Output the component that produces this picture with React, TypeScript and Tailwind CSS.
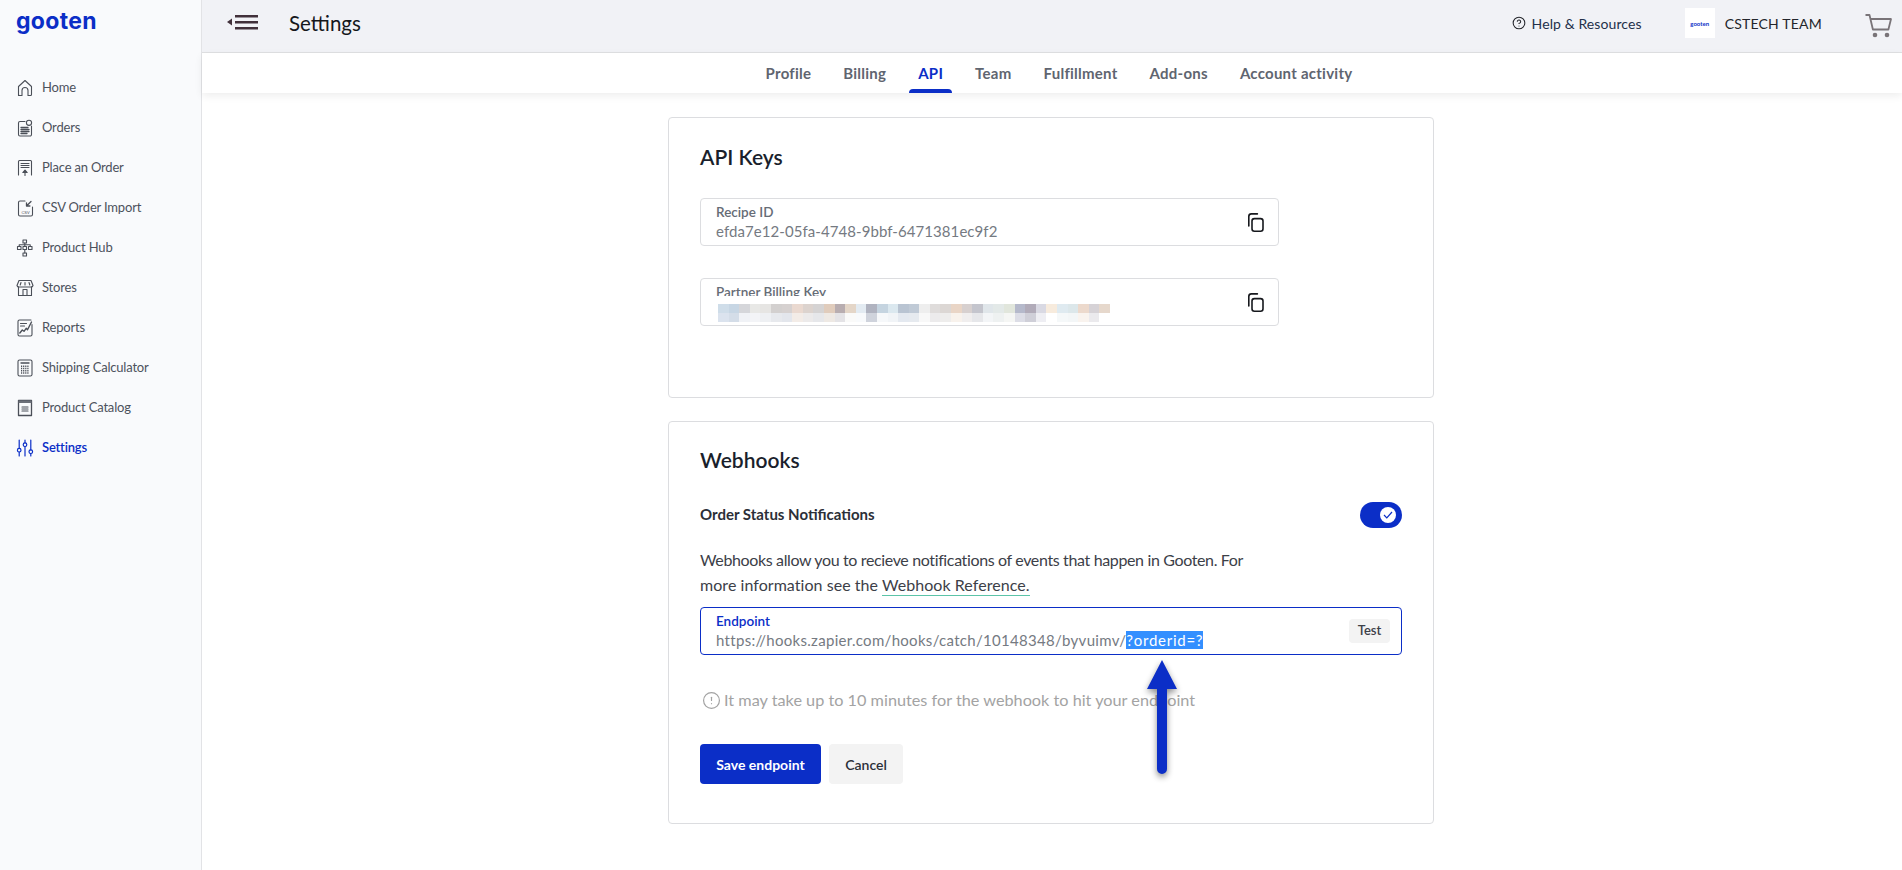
import { CircleAlert, CircleHelp } from "lucide-react";
import type { ReactNode } from "react";

const base = "Lato, 'Noto Sans', sans-serif";

function Ico({ children, color = "#4b4f58" }: { children: ReactNode; color?: string }) {
  return (
    <svg
      width="18"
      height="18"
      viewBox="0 0 18 18"
      fill="none"
      stroke={color}
      strokeWidth="1.1"
      strokeLinecap="round"
      strokeLinejoin="round"
      className="shrink-0"
    >
      {children}
    </svg>
  );
}

const navItems: { label: string; icon: ReactNode; active?: boolean }[] = [
  {
    label: "Home",
    icon: (
      <Ico>
        <path d="M2.5 16.5V7.5L9 1.5l6.5 6v8a1 1 0 0 1-1 1h-2.5v-5a3 3 0 0 0-6 0v5H3.5a1 1 0 0 1-1-1z" />
      </Ico>
    ),
  },
  {
    label: "Orders",
    icon: (
      <Ico>
        <path d="M9 2.5H4a1.5 1.5 0 0 0-1.5 1.5v11.5A1.5 1.5 0 0 0 4 17h10a1.5 1.5 0 0 0 1.5-1.5V7" />
        <circle cx="13" cy="3.8" r="2.6" />
        <path d="M5 8.5h7M5 10.5h8M5 12.5h8M5 14.5h6" strokeWidth="1.3" />
      </Ico>
    ),
  },
  {
    label: "Place an Order",
    icon: (
      <Ico>
        <path d="M2.5 16V2.5a1 1 0 0 1 1-1h11a1 1 0 0 1 1 1V16" />
        <path d="M5 4.5h8M5 6.5h8M5 8.5h8" />
        <path d="M9 16.5V11.5M6.8 13.5L9 11l2.2 2.5z" fill="#4b4f58" />
      </Ico>
    ),
  },
  {
    label: "CSV Order Import",
    icon: (
      <Ico>
        <path d="M9 2H4a1.5 1.5 0 0 0-1.5 1.5v12A1.5 1.5 0 0 0 4 17h11a1.5 1.5 0 0 0 1.5-1.5V8" />
        <path d="M15 2.5L10.5 7M10.5 3.8V7h3.4" strokeWidth="1.3" />
        <text x="9.5" y="14.5" fontSize="4" textAnchor="middle" fill="#4b4f58" stroke="none" fontFamily="'Liberation Sans', sans-serif">
          CSV
        </text>
      </Ico>
    ),
  },
  {
    label: "Product Hub",
    icon: (
      <Ico>
        <rect x="7" y="1" width="3.5" height="3" />
        <rect x="1.5" y="7.5" width="3.5" height="3" />
        <rect x="7" y="7.5" width="3.5" height="3" />
        <rect x="12.5" y="7.5" width="3.5" height="3" />
        <rect x="7" y="14" width="3.5" height="3" />
        <path d="M8.8 4v3.5M8.8 10.5V14M3.2 7.5V5.7h11v1.8" />
      </Ico>
    ),
  },
  {
    label: "Stores",
    icon: (
      <Ico>
        <path d="M3 1.5h12l2 5a2 2 0 0 1-2 1.5H3A2 2 0 0 1 1 6.5z" />
        <path d="M2.5 8v8.5h13V8M7 16.5v-6h4v6M5 3.5l-.8 2.5M9 3.5V6M13 3.5l.8 2.5" />
      </Ico>
    ),
  },
  {
    label: "Reports",
    icon: (
      <Ico>
        <path d="M16 5.5v10a1.5 1.5 0 0 1-1.5 1.5h-11A1.5 1.5 0 0 1 2 15.5v-13A1.5 1.5 0 0 1 3.5 1H15" />
        <path d="M4.5 4.5h6M4.5 7h4" />
        <path d="M3.8 14l2.5-3 1.7 1.3 2.2-3 1.3 1.4L15.5 3" strokeWidth="1.4" />
      </Ico>
    ),
  },
  {
    label: "Shipping Calculator",
    icon: (
      <Ico>
        <rect x="2" y="1" width="14" height="16" rx="1.6" />
        <path d="M5 4h8" strokeWidth="1.3" />
        <path d="M5 7.2h8M5 9.5h8M5 11.7h8M5 14h8" strokeWidth="1.4" strokeDasharray="1.2 .9" strokeLinecap="butt" />
      </Ico>
    ),
  },
  {
    label: "Product Catalog",
    icon: (
      <Ico>
        <rect x="2.5" y="1.5" width="13" height="15" strokeWidth="1.3" />
        <rect x="2.5" y="1.5" width="13" height="2.5" fill="#6b6f78" stroke="none" />
        <path d="M6 8h6M6 10h6M6 12h6" strokeWidth="1.2" />
      </Ico>
    ),
  },
  {
    label: "Settings",
    active: true,
    icon: (
      <Ico color="#0b2ec7">
        <path d="M3.2 1v8.5M3.2 13v4M9 1v3M9 7.5V17M14.8 1v10M14.8 14.5V17" strokeWidth="1.2" />
        <circle cx="3.2" cy="11.2" r="1.8" strokeWidth="1.2" />
        <circle cx="9" cy="5.7" r="1.8" strokeWidth="1.2" />
        <circle cx="14.8" cy="12.7" r="1.8" strokeWidth="1.2" />
      </Ico>
    ),
  },
];

const tabs = ["Profile", "Billing", "API", "Team", "Fulfillment", "Add-ons", "Account activity"];

const blurTop = [
  "#cfdde9", "#c7d6e4", "#d5d6da", "#e8e8e6", "#e6e5e3", "#d3d0cf", "#d6d1d0", "#ead9d0", "#dcd3ce", "#d5d3d3",
  "#e0ccbc", "#b8adb0", "#e4d6c8", "#e3ebf2", "#b0b3c0", "#c5d4e0", "#dbe8ef", "#b9c4d2", "#c0cad6", "#eeeeee",
  "#dfdcdb", "#dcd7d4", "#e9d5c6", "#d7d0cf", "#c4c5cd", "#e0e6ea", "#e3e9e8", "#e1e6dc", "#b5b9cb", "#b1abb9",
  "#d9d9e3", "#f7ebdd", "#dfeaf0", "#dce7ea", "#ecd9cc", "#d6d2d6", "#e6d8cc",
];
const blurBottom = [
  "#dbe3ee", "#d4dde8", "#f0f2f6", "#f3f4f7", "#eef0f3", "#e7e9ed", "#e3e6ec", "#f3ece7", "#eceaea", "#e6e7ea",
  "#eee9e4", "#e4e3e6", "#fafaf9", "#f8fafc", "#cfd3dc", "#f6f8fa", "#f1f4f7", "#e4e9f0", "#e6eaef", "#f8f8f8",
  "#ecebec", "#eeedec", "#f8f2ec", "#f0eeee", "#e6e7ea", "#f3f5f7", "#eef1f1", "#f5f6f4", "#dcdde6", "#cfcfd8",
  "#eeeef3", "#fff", "#f5f8f9", "#f3f6f7", "#f9f3ee", "#ebeaed", "#ffffff",
];

function CopyIcon() {
  return (
    <svg width="19" height="19" viewBox="0 0 19 19" fill="none" stroke="#16181d" strokeWidth="1.6" strokeLinecap="round" strokeLinejoin="round">
      <rect x="7" y="5.6" width="11" height="12.6" rx="2.4" />
      <path d="M3.8 13V3.4A2.6 2.6 0 0 1 6.4 .9h6" />
    </svg>
  );
}

function Field({ label, children }: { label: string; children: ReactNode }) {
  return (
    <div className="flex h-[48px] w-[579px] items-center justify-between rounded border border-[#dcdde0] pl-[15px] pr-[14px]">
      <div className="flex h-full flex-col pt-[3px]">
        <div className="h-[20px] text-[13.5px] leading-[20px] font-semibold text-[#666c76]">{label}</div>
        {children}
      </div>
      <CopyIcon />
    </div>
  );
}

export default function App() {
  return (
    <div className="flex h-screen overflow-hidden bg-white" style={{ fontFamily: base }}>
      <aside className="flex w-[202px] shrink-0 flex-col border-r border-[#e2e3e6] bg-[#f9fafc] pl-[16px]">
        <div className="h-[68px] pt-[3px] text-[23px] leading-[36px] font-bold tracking-[0.3px] text-[#0b2ec7]" style={{ fontFamily: "Inter, sans-serif" }}>
          gooten
        </div>
        <nav className="flex flex-col">
          {navItems.map((item) => (
            <div key={item.label} className="flex h-[40px] items-center gap-[8px]">
              {item.icon}
              <span className={item.active ? "text-[13px] font-semibold tracking-[-0.19px] text-[#0b2ec7]" : "text-[13px] tracking-[-0.19px] text-[#4d525c]"}>{item.label}</span>
            </div>
          ))}
        </nav>
      </aside>

      <div className="flex min-w-0 flex-1 flex-col">
        <header className="flex h-[53px] shrink-0 items-center justify-between border-b border-[#dfe0e2] bg-[#f1f2f6] pb-[6px]">
          <div className="flex items-center">
            <svg width="32" height="16" viewBox="0 0 32 16" className="ml-[25px]">
              <path d="M0 7l5-3.5v7z" fill="#41303a" />
              <path d="M8 1.2h23M8 7.2h23M8 13.2h23" stroke="#41303a" strokeWidth="2.6" />
            </svg>
            <span className="ml-[30px] text-[20.5px] text-[#15171c]">Settings</span>
          </div>
          <div className="flex items-center">
            <CircleHelp size={14} strokeWidth={1.8} className="text-[#23252b]" />
            <span className="ml-[6px] text-[14px] tracking-[0.1px] text-[#23304a]">Help &amp; Resources</span>
            <div className="ml-[43px] flex h-[30px] w-[30px] items-center justify-center bg-white text-[6px] font-bold text-[#0b2ec7]">gooten</div>
            <span className="ml-[10px] text-[14px] tracking-[0.2px] text-[#23252b]">CSTECH TEAM</span>
            <svg width="27" height="24" viewBox="0 0 27 24" fill="none" className="ml-[43px] mr-[10px] mt-[6px]">
              <path d="M.5 1h4l3.4 14.5h15.5L26 5H5.5" stroke="#797478" strokeWidth="1.8" strokeLinejoin="round" />
              <circle cx="10" cy="21" r="2.3" fill="#797478" />
              <circle cx="22" cy="21" r="2.3" fill="#797478" />
            </svg>
          </div>
        </header>

        <div className="flex h-[40px] shrink-0 justify-center gap-[32px] bg-white pl-[14px] pt-[10px] shadow-[0_3px_8px_rgba(0,0,0,0.07)]">
          {tabs.map((t) => (
            <div key={t} className={t === "API" ? "relative text-[15px] leading-[20px] font-bold tracking-[0.25px] text-[#0b2ec7]" : "text-[15px] leading-[20px] font-bold tracking-[0.25px] text-[#5f6570]"}>
              {t}
              {t === "API" && <div className="absolute -left-[9px] -right-[9px] top-[26px] h-[4px] rounded-t bg-[#0b2ec7]" />}
            </div>
          ))}
        </div>

        <main className="flex flex-col items-center pt-[24px] pr-[2px]">
          <section className="h-[281px] w-[766px] rounded border border-[#dcdde0] pl-[31px] pt-[25px]">
            <h2 className="h-[28px] text-[21px] leading-[28px] font-semibold text-[#1a1f2c]">API Keys</h2>
            <div className="mt-[27px]">
              <Field label="Recipe ID">
                <div className="text-[15px] leading-[19px] tracking-[0.07px] text-[#757a82]">efda7e12-05fa-4748-9bbf-6471381ec9f2</div>
              </Field>
            </div>
            <div className="mt-[32px]">
              <div className="flex h-[48px] w-[579px] items-center justify-between rounded border border-[#dcdde0] pl-[15px] pr-[14px]">
                <div className="flex h-full flex-col pt-[3px]">
                  <div className="h-[14px] overflow-hidden text-[13.5px] leading-[20px] font-semibold text-[#666c76]">Partner Billing Key</div>
                  <div className="mt-[8px] ml-[2px] flex flex-col">
                    {[blurTop, blurBottom].map((row, i) => (
                      <div key={i} className="flex h-[9px]">
                        {row.map((c, j) => (
                          <div key={j} className="h-full w-[10.6px]" style={{ backgroundColor: c }} />
                        ))}
                      </div>
                    ))}
                  </div>
                </div>
                <CopyIcon />
              </div>
            </div>
          </section>

          <section className="relative mt-[23px] h-[403px] w-[766px] rounded border border-[#dcdde0] pl-[31px] pr-[31px] pt-[24px]">
            <h2 className="h-[28px] text-[21px] leading-[28px] font-semibold text-[#1a1f2c]">Webhooks</h2>
            <div className="mt-[28px] flex h-[26px] items-center justify-between">
              <span className="pb-[2px] text-[15px] font-bold text-[#2b2f38]">Order Status Notifications</span>
              <div className="flex h-[26px] w-[42px] items-center justify-end rounded-full bg-[#0b2ec7] pr-[6px]">
                <div className="flex h-[16px] w-[16px] items-center justify-center rounded-full bg-white">
                  <svg width="10" height="8" viewBox="0 0 10 8" fill="none">
                    <path d="M1 4l2.8 2.8L9 1" stroke="#0b2ec7" strokeWidth="1.2" />
                  </svg>
                </div>
              </div>
            </div>
            <p className="mt-[19px] text-[16px] leading-[25px] text-[#3c4048]">
              <span className="tracking-[-0.36px]">Webhooks allow you to recieve notifications of events that happen in Gooten. For</span>
              <br />
              <span className="tracking-[0.05px]">
                more information see the <span className="border-b border-[#5cc4a8] pb-[1px]">Webhook Reference.</span>
              </span>
            </p>
            <div className="mt-[10px] flex h-[48px] items-center justify-between rounded border border-[#0b2ec7] pl-[15px] pr-[11px]">
              <div className="flex h-full flex-col pt-[3px]">
                <div className="h-[20px] text-[13.5px] leading-[20px] font-semibold text-[#0b2ec7]">Endpoint</div>
                <div className="text-[15px] leading-[19px] tracking-[0.3px] text-[#757a82]">
                  https://hooks.zapier.com/hooks/catch/10148348/byvuimv/
                  <span className="bg-[#338fff] tracking-[0.75px] text-white">?orderid=?</span>
                </div>
              </div>
              <div className="flex h-[24px] w-[41px] items-center justify-center rounded bg-[#f3f3f3] text-[13px] font-semibold text-[#3c4048]">Test</div>
            </div>
            <div className="mt-[35px] flex h-[20px] items-center pl-[2px] text-[#a3a3a3]">
              <CircleAlert size={19} strokeWidth={1.5} />
              <span className="ml-[3px] text-[16.25px]">It may take up to 10 minutes for the webhook to hit your endpoint</span>
            </div>
            <div className="mt-[34px] flex gap-[8px]">
              <button type="button" className="h-[40px] w-[121px] rounded bg-[#0b2ec7] text-[14px] font-bold text-white">
                Save endpoint
              </button>
              <button type="button" className="h-[40px] w-[74px] rounded bg-[#f3f3f3] text-[14px] font-semibold text-[#2b2f38]">
                Cancel
              </button>
            </div>
            {/* annotation arrow lying over the form */}
            <svg width="44" height="126" viewBox="0 0 44 126" className="absolute left-[471px] top-[236px] drop-shadow-[0_3px_3px_rgba(0,0,0,0.45)]">
              <path d="M22 2L37 31H27V111a5 5 0 0 1-10 0V31H7z" fill="#0b2ec7" />
            </svg>
          </section>
        </main>
      </div>
    </div>
  );
}
